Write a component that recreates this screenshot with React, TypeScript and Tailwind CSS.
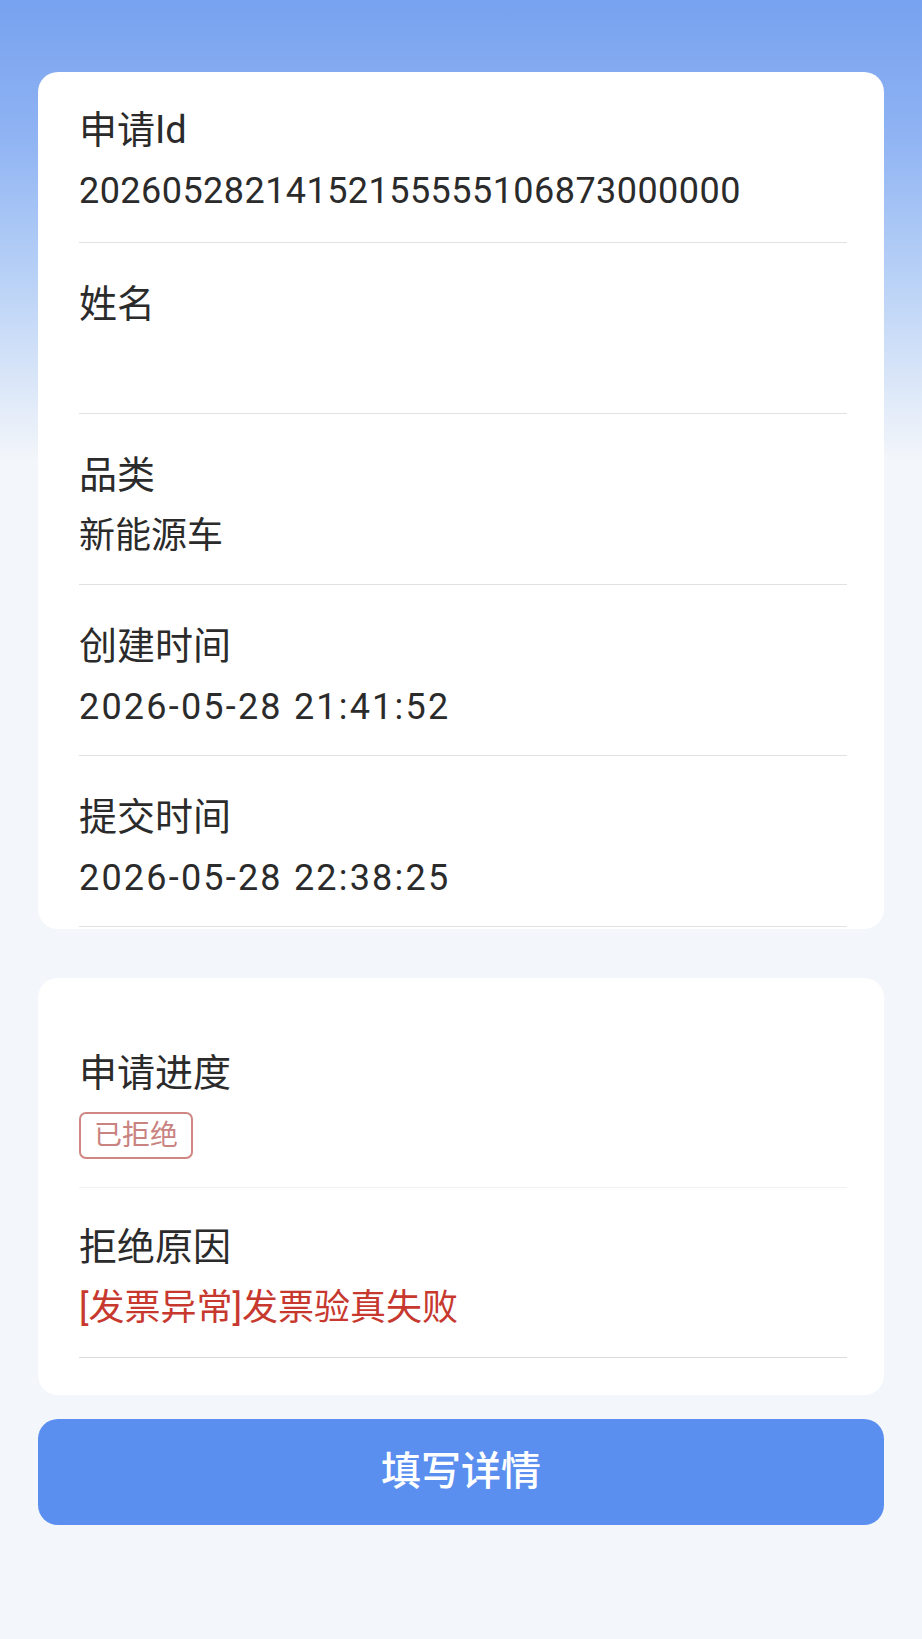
import React from 'react';

const FONT = "font-['Roboto','Noto_Sans_CJK_SC',sans-serif]";

interface InfoRowProps {
  label: string;
  children?: React.ReactNode;
  className?: string;
  divider?: string;
}

const InfoRow: React.FC<InfoRowProps> = ({ label, children, className = 'pt-[31px] pb-[19px]', divider = 'border-[#e2e2e2]' }) => (
  <div className={`border-b ${divider} ${className}`}>
    <div className="h-[60px] leading-[60px] text-[38px] text-[#2b2b2b]">{label}</div>
    {children}
  </div>
);

const Value: React.FC<{ children?: React.ReactNode; className?: string }> = ({ children, className = 'text-[#2b2b2b]' }) => (
  <div className={`h-[60px] leading-[62px] text-[36px] whitespace-nowrap ${className}`}>{children}</div>
);

const App: React.FC = () => {
  return (
    <div
      className={`min-h-[1639px] w-full bg-[linear-gradient(180deg,#77a2ef_0px,#8fb3f3_134px,#b5cff6_268px,#e3ecf9_410px,#f3f6fa_460px,#f3f6fa_100%)] px-[38px] pt-[72px] ${FONT}`}
    >
      {/* basic info */}
      <section className="overflow-hidden rounded-[20px] bg-white pb-[2px] pl-[41px] pr-[37px]">
        <InfoRow label="申请Id" className="pt-[28px] pb-[22px]">
          <Value className="text-[#2b2b2b] tracking-[0.45px]">20260528214152155555106873000000</Value>
        </InfoRow>
        <InfoRow label="姓名">
          <Value />
        </InfoRow>
        <InfoRow label="品类">
          <Value>新能源车</Value>
        </InfoRow>
        <InfoRow label="创建时间">
          <Value className="text-[#2b2b2b] tracking-[2.2px]">2026-05-28 21:41:52</Value>
        </InfoRow>
        <InfoRow label="提交时间">
          <Value className="text-[#2b2b2b] tracking-[2.2px]">2026-05-28 22:38:25</Value>
        </InfoRow>
      </section>

      {/* progress */}
      <section className="mt-[49px] rounded-[20px] bg-white pb-[37px] pl-[41px] pr-[37px] pt-[34px]">
        <InfoRow label="申请进度" className="pt-[31px] pb-[28px]" divider="border-[#f1f1f1]">
          <div className="mt-[9px] flex">
            <span className="flex h-[47px] w-[114px] items-center justify-center rounded-[7px] border-2 border-[#d08783] text-[28px] text-[#c98380]">
              已拒绝
            </span>
          </div>
        </InfoRow>
        <InfoRow label="拒绝原因" className="pt-[29px] pb-[20px]" divider="border-[#dcdcdc]">
          <Value className="text-[#c7392f]">[发票异常]发票验真失败</Value>
        </InfoRow>
      </section>

      <button
        type="button"
        className="mt-[24px] flex h-[106px] w-full items-center justify-center rounded-[20px] bg-[#5a8ff0] text-[40px] font-medium text-white"
      >
        填写详情
      </button>
    </div>
  );
};

export default App;
